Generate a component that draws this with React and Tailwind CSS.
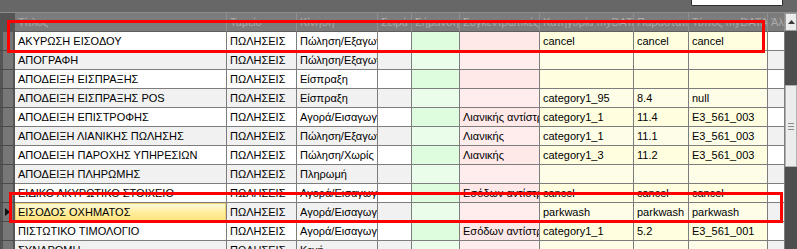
const columns = [
  { label: "Τίτλος", w: "w-[212px]", bg: ["bg-white", "bg-[#f1f1f1]"] },
  { label: "Ταμείο", w: "w-[70px]", bg: ["bg-white", "bg-[#f1f1f1]"] },
  { label: "Κίνηση", w: "w-[81px]", bg: ["bg-white", "bg-[#f1f1f1]"] },
  { label: "Σειρά", w: "w-[34px]", bg: ["bg-white", "bg-[#f1f1f1]"] },
  { label: "Σήμανση", w: "w-[48px]", bg: ["bg-[#defcde]", "bg-[#eafcea]"] },
  { label: "Συγκεντρωτικές", w: "w-[80px]", bg: ["bg-[#ffe8e8]", "bg-[#ffecec]"] },
  { label: "Κατηγορία myDATA", w: "w-[94px]", bg: ["bg-[#ffffe0]", "bg-[#fefde8]"] },
  { label: "Παραστατικό", w: "w-[55px]", bg: ["bg-[#ffffe0]", "bg-[#fefde8]"] },
  { label: "Τύπος myDATA", w: "w-[79px]", bg: ["bg-[#ffffe0]", "bg-[#fefde8]"] },
  { label: "Άλ", w: "w-[17px]", bg: ["bg-white", "bg-[#f1f1f1]"] },
];

const rows = [
  ["ΑΚΥΡΩΣΗ ΕΙΣΟΔΟΥ", "ΠΩΛΗΣΕΙΣ", "Πώληση/Εξαγωγή", "", "", "", "cancel", "cancel", "cancel", ""],
  ["ΑΠΟΓΡΑΦΗ", "ΠΩΛΗΣΕΙΣ", "Πώληση/Εξαγωγή", "", "", "", "", "", "", ""],
  ["ΑΠΟΔΕΙΞΗ ΕΙΣΠΡΑΞΗΣ", "ΠΩΛΗΣΕΙΣ", "Είσπραξη", "", "", "", "", "", "", ""],
  ["ΑΠΟΔΕΙΞΗ ΕΙΣΠΡΑΞΗΣ POS", "ΠΩΛΗΣΕΙΣ", "Είσπραξη", "", "", "", "category1_95", "8.4", "null", ""],
  ["ΑΠΟΔΕΙΞΗ ΕΠΙΣΤΡΟΦΗΣ", "ΠΩΛΗΣΕΙΣ", "Αγορά/Εισαγωγή", "", "", "Λιανικής αντίστροφη", "category1_1", "11.4", "E3_561_003", ""],
  ["ΑΠΟΔΕΙΞΗ ΛΙΑΝΙΚΗΣ ΠΩΛΗΣΗΣ", "ΠΩΛΗΣΕΙΣ", "Πώληση/Εξαγωγή", "", "", "Λιανικής", "category1_1", "11.1", "E3_561_003", ""],
  ["ΑΠΟΔΕΙΞΗ ΠΑΡΟΧΗΣ ΥΠΗΡΕΣΙΩΝ", "ΠΩΛΗΣΕΙΣ", "Πώληση/Χωρίς δαπάνη", "", "", "Λιανικής", "category1_3", "11.2", "E3_561_003", ""],
  ["ΑΠΟΔΕΙΞΗ ΠΛΗΡΩΜΗΣ", "ΠΩΛΗΣΕΙΣ", "Πληρωμή", "", "", "", "", "", "", ""],
  ["ΕΙΔΙΚΟ ΑΚΥΡΩΤΙΚΟ ΣΤΟΙΧΕΙΟ", "ΠΩΛΗΣΕΙΣ", "Αγορά/Εισαγωγή", "", "", "Εσόδων αντίστροφη", "cancel", "cancel", "cancel", ""],
  ["ΕΙΣΟΔΟΣ ΟΧΗΜΑΤΟΣ", "ΠΩΛΗΣΕΙΣ", "Αγορά/Εισαγωγή", "", "", "", "parkwash", "parkwash", "parkwash", ""],
  ["ΠΙΣΤΩΤΙΚΟ ΤΙΜΟΛΟΓΙΟ", "ΠΩΛΗΣΕΙΣ", "Αγορά/Εισαγωγή", "", "", "Εσόδων αντίστροφη", "category1_1", "5.2", "E3_561_001", ""],
  ["ΣΥΝΔΡΟΜΗ", "ΠΩΛΗΣΕΙΣ", "Κενή", "", "", "", "", "", "", ""],
];

const SELECTED = 9;

function Indicator({ active }) {
  return (
    <div className="w-[15px] h-[19px] shrink-0 bg-[#555555] flex items-stretch pl-[3px] pr-[2px] border-b border-[#4a4a4a]">
      <div className="flex-1 bg-[#777777] flex items-center">
        {active && (
          <svg width="5" height="8" viewBox="0 0 5 8" className="ml-[2px]">
            <path d="M0 0 L5 4 L0 8 Z" fill="#111" />
          </svg>
        )}
      </div>
    </div>
  );
}

function Scrollbar() {
  return (
    <div className="w-[12px] shrink-0 bg-[#4e4e4e] flex flex-col">
      <div className="h-[18px] bg-[#ececec] border border-[#9a9a9a] flex items-center justify-center">
        <svg width="7" height="4" viewBox="0 0 7 4">
          <path d="M0 4 L3.5 0 L7 4 Z" fill="#3a3a3a" />
        </svg>
      </div>
      <div className="h-[54px]" />
      <div className="h-[82px] bg-[#ececec] border border-[#b0b0b0] flex flex-col items-center justify-center gap-[2px]">
        <div className="w-[6px] h-px bg-[#8a8a8a]" />
        <div className="w-[6px] h-px bg-[#8a8a8a]" />
        <div className="w-[6px] h-px bg-[#8a8a8a]" />
      </div>
    </div>
  );
}

export default function App() {
  return (
    <div className="relative w-[797px] h-[249px] overflow-hidden bg-[#6a6a6a] text-[11px] text-black [font-family:'Liberation_Sans',Arial,sans-serif]">
      {/* top strip */}
      <div className="h-[13px] flex justify-end border-b border-[#8c8c8c] bg-[#676767]">
        <div className="w-[92px] h-[6px] mr-[14px] bg-white border border-t-0 border-[#2e2e2e] rounded-b-[2px]" />
      </div>

      <div className="flex">
        <div className="flex-1 flex flex-col">
          {/* header */}
          <div className="flex h-[19px] bg-[#7c7c7c]">
            <div className="w-[15px] shrink-0 bg-[#555555]" />
            {columns.map((c, i) => (
              <div
                key={i}
                className={`${c.w} shrink-0 h-[19px] px-[3px] leading-[18px] border-r border-b border-[#8f8f8f] border-b-[#5e5e5e] text-[#ababab] whitespace-nowrap overflow-hidden`}
              >
                {c.label}
              </div>
            ))}
          </div>

          {/* body */}
          {rows.map((r, ri) => (
            <div key={ri} className="flex h-[19px]">
              <Indicator active={ri === SELECTED} />
              {r.map((v, ci) => {
                const col = columns[ci];
                const sel = ri === SELECTED && ci === 0;
                return (
                  <div
                    key={ci}
                    className={`${col.w} shrink-0 h-[19px] px-[3px] leading-[18px] border-r border-b border-[#7d7d7d] whitespace-nowrap overflow-hidden ${
                      sel
                        ? "bg-gradient-to-b from-[#fffbe2] via-[#ffee9e] to-[#ffe47c] shadow-[inset_0_0_0_1px_#f0cf70]"
                        : col.bg[ri % 2]
                    }`}
                  >
                    {v}
                  </div>
                );
              })}
            </div>
          ))}
        </div>
        <Scrollbar />
      </div>

      {/* annotation boxes */}
      <div className="absolute left-[7px] top-[20px] w-[758px] h-[33px] border-[3px] border-[#ff0000] pointer-events-none" />
      <div className="absolute left-[9px] top-[192px] w-[774px] h-[31px] border-[3px] border-[#ff0000] pointer-events-none" />
    </div>
  );
}
